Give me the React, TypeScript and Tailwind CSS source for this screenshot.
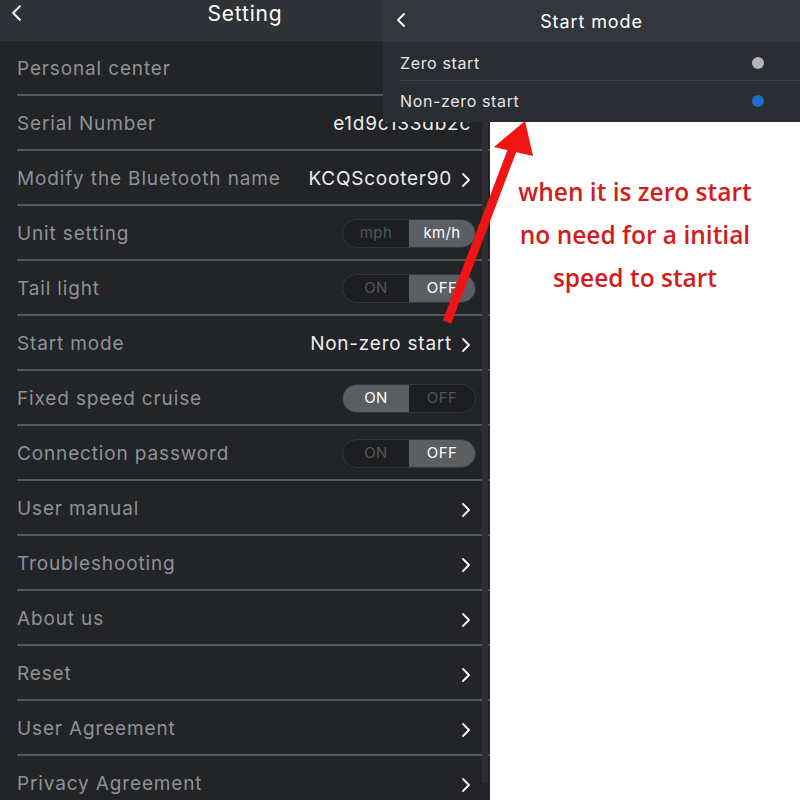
import React from "react";

type Row = {
  label: string;
  value?: string;
  chevron?: boolean;
  toggle?: { left: string; right: string; active: "left" | "right" };
};

const rows: Row[] = [
  { label: "Personal center" },
  { label: "Serial Number", value: "e1d9c133db2c" },
  { label: "Modify the Bluetooth name", value: "KCQScooter90", chevron: true },
  { label: "Unit setting", toggle: { left: "mph", right: "km/h", active: "right" } },
  { label: "Tail light", toggle: { left: "ON", right: "OFF", active: "right" } },
  { label: "Start mode", value: "Non-zero start", chevron: true },
  { label: "Fixed speed cruise", toggle: { left: "ON", right: "OFF", active: "left" } },
  { label: "Connection password", toggle: { left: "ON", right: "OFF", active: "right" } },
  { label: "User manual", chevron: true },
  { label: "Troubleshooting", chevron: true },
  { label: "About us", chevron: true },
  { label: "Reset", chevron: true },
  { label: "User Agreement", chevron: true },
  { label: "Privacy Agreement", chevron: true },
];

const Chevron = ({ dir = "right", className = "" }: { dir?: "left" | "right"; className?: string }) => (
  <svg width="10" height="16" viewBox="0 0 10 16" className={className}>
    <polyline
      points={dir === "right" ? "2,2 8,8 2,14" : "8,2 2,8 8,14"}
      fill="none"
      stroke="currentColor"
      strokeWidth="1.8"
      strokeLinecap="round"
      strokeLinejoin="round"
    />
  </svg>
);

const Toggle = ({ left, right, active }: { left: string; right: string; active: "left" | "right" }) => (
  <div className="-mr-[5px] -mt-[3px] flex h-[29px] w-[134px] overflow-hidden rounded-full border border-[#34373a] bg-[#1c1e21] text-[15px] tracking-wide">
    <div
      className={
        active === "left"
          ? "flex flex-1 items-center justify-center bg-[#5b5e62] text-white"
          : "flex flex-1 items-center justify-center text-[#54585c]"
      }
    >
      {left}
    </div>
    <div
      className={
        active === "right"
          ? "flex flex-1 items-center justify-center bg-[#5b5e62] text-white"
          : "flex flex-1 items-center justify-center text-[#54585c]"
      }
    >
      {right}
    </div>
  </div>
);

const App = () => {
  return (
    <div
      className="relative flex h-[800px] w-[800px] overflow-hidden bg-white"
      style={{ fontFamily: "Inter, 'Noto Sans', sans-serif" }}
    >
      {/* settings screen */}
      <div className="relative flex w-[490px] shrink-0 flex-col bg-[#222427]">
        <div className="relative flex h-[41px] shrink-0 items-center justify-center bg-[#2f3237]">
          <Chevron dir="left" className="absolute left-[10px] top-[4px] h-[18px] w-[13px] text-white" />
          <span className="-mt-[14px] text-[21px] tracking-[0.04em] text-white">Setting</span>
        </div>
        {rows.map((row) => (
          <div key={row.label} className="ml-[17px] flex h-[55px] shrink-0 items-center border-b-2 border-[#55585b] pr-[19px] pt-[4px]">
            <span className="flex-1 text-[19px] tracking-[0.045em] text-[#8f9295]">{row.label}</span>
            {row.value && <span className="text-[19px] tracking-[0.04em] text-[#ececec]">{row.value}</span>}
            {row.chevron && <Chevron className="ml-[9px] text-white" />}
            {row.toggle && <Toggle {...row.toggle} />}
          </div>
        ))}
        <div className="absolute right-[2px] top-[122px] h-[661px] w-[6px] bg-[#2c2e31]" />
      </div>

      {/* annotation */}
      <div
        className="flex flex-1 flex-col items-center pr-[20px] pt-[170px] text-[24.5px] font-semibold leading-[43px] text-[#d21c1c]"
        style={{ fontFamily: "'Open Sans', sans-serif" }}
      >
        <span>when it is zero start</span>
        <span>no need for a initial</span>
        <span>speed to start</span>
      </div>

      {/* start mode popup screen */}
      <div className="absolute left-[383px] top-0 flex h-[122px] w-[417px] flex-col bg-[#2a2d31] text-[#e6e6e6]">
        <div className="relative flex h-[42px] shrink-0 items-center justify-center bg-[#33373c]">
          <Chevron dir="left" className="absolute left-[12px] top-[12px] h-[16px] w-[12px] text-white" />
          <span className="text-[18px] tracking-[0.05em] text-white">Start mode</span>
        </div>
        <div className="ml-[17px] flex h-[39px] items-center border-b border-[#3c4044] pr-[36px] pt-[3px] text-[16px] tracking-[0.04em]">
          <span className="flex-1">Zero start</span>
          <span className="h-[12px] w-[12px] rounded-full bg-[#b4b4b4]" />
        </div>
        <div className="ml-[17px] flex h-[40px] items-center pr-[36px] text-[16px] tracking-[0.04em]">
          <span className="flex-1">Non-zero start</span>
          <span className="h-[12px] w-[12px] rounded-full bg-[#1c6dcc]" />
        </div>
      </div>

      {/* red arrow */}
      <svg className="pointer-events-none absolute left-0 top-0" width="800" height="800" viewBox="0 0 800 800">
        <line x1="447" y1="322" x2="513" y2="148" stroke="#f01414" strokeWidth="9" />
        <polygon points="525,121 494,147 533,156" fill="#f01414" />
      </svg>
    </div>
  );
};

export default App;
